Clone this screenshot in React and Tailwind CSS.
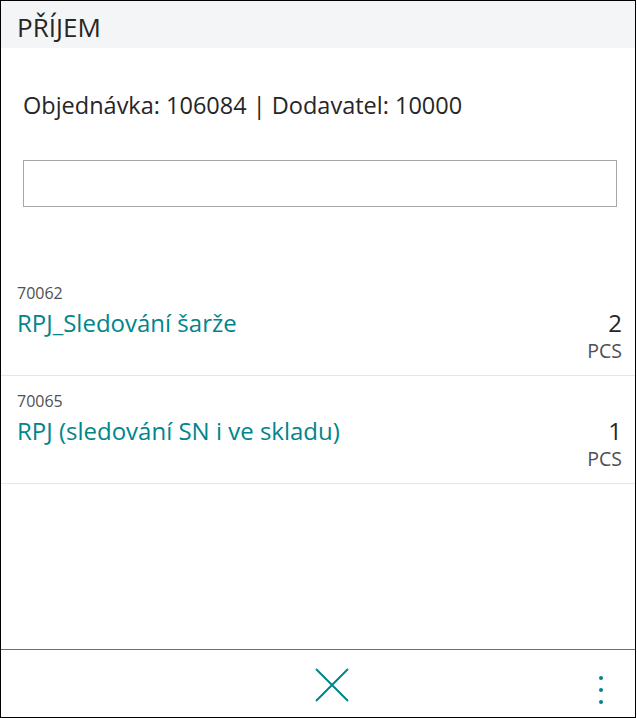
import React from 'react';

const items = [
  { no: '70062', name: 'RPJ_Sledování šarže', qty: 2, uom: 'PCS' },
  { no: '70065', name: 'RPJ (sledování SN i ve skladu)', qty: 1, uom: 'PCS' },
];

const ItemRow = ({ item }) => (
  <div className="flex items-start justify-between border-b border-[#e6e6e6] pl-[16px] pr-[13px] pt-[13px] pb-[14px]">
    <div className="flex flex-col">
      <span className="text-[16px] leading-[24px] text-[#505050]">{item.no}</span>
      <span className="text-[24px] leading-[36px] text-[#00858c]">{item.name}</span>
    </div>
    <div className="flex flex-col items-end pt-[24px]">
      <span className="text-[24px] leading-[36px] text-[#262626]">{item.qty}</span>
      <span className="text-[19.5px] leading-[20px] text-[#505050]">{item.uom}</span>
    </div>
  </div>
);

export default function App() {
  return (
    <div className="flex h-[718px] w-[636px] flex-col border border-black bg-white font-['Open_Sans',sans-serif]">
      {/* Header */}
      <div className="flex h-[47px] items-center bg-[#f4f5f7] px-[16px] pt-[5px]">
        <h1 className="text-[26px] font-normal text-[#262626]">PŘÍJEM</h1>
      </div>

      <div className="flex-1">
        <p className="px-[22px] pt-[42px] text-[23.5px] leading-[30px] text-[#262626]">
          Objednávka: 106084 | Dodavatel: 10000
        </p>

        <div className="pl-[22px] pr-[18px] pt-[40px]">
          <input
            type="text"
            className="h-[47px] w-full border border-[#a6a6a6] px-3 text-[18px] outline-none"
          />
        </div>

        <div className="mt-[61px]">
          {items.map((item) => (
            <ItemRow key={item.no} item={item} />
          ))}
        </div>
      </div>

      {/* Footer */}
      <div className="relative flex h-[68px] items-center justify-center border-t border-[#6e6e6e]">
        <button className="ml-[27px] mt-[3px] p-0">
          <svg width="34" height="34" viewBox="0 0 34 34" fill="none" stroke="#00858c" strokeWidth="2">
            <path d="M1 1 L33 33 M33 1 L1 33" />
          </svg>
        </button>
        <button className="absolute right-[32px] top-[26px] flex flex-col gap-[8px]">
          <span className="h-[4px] w-[4px] rounded-full bg-[#00858c]" />
          <span className="h-[4px] w-[4px] rounded-full bg-[#00858c]" />
          <span className="h-[4px] w-[4px] rounded-full bg-[#00858c]" />
        </button>
      </div>
    </div>
  );
}
